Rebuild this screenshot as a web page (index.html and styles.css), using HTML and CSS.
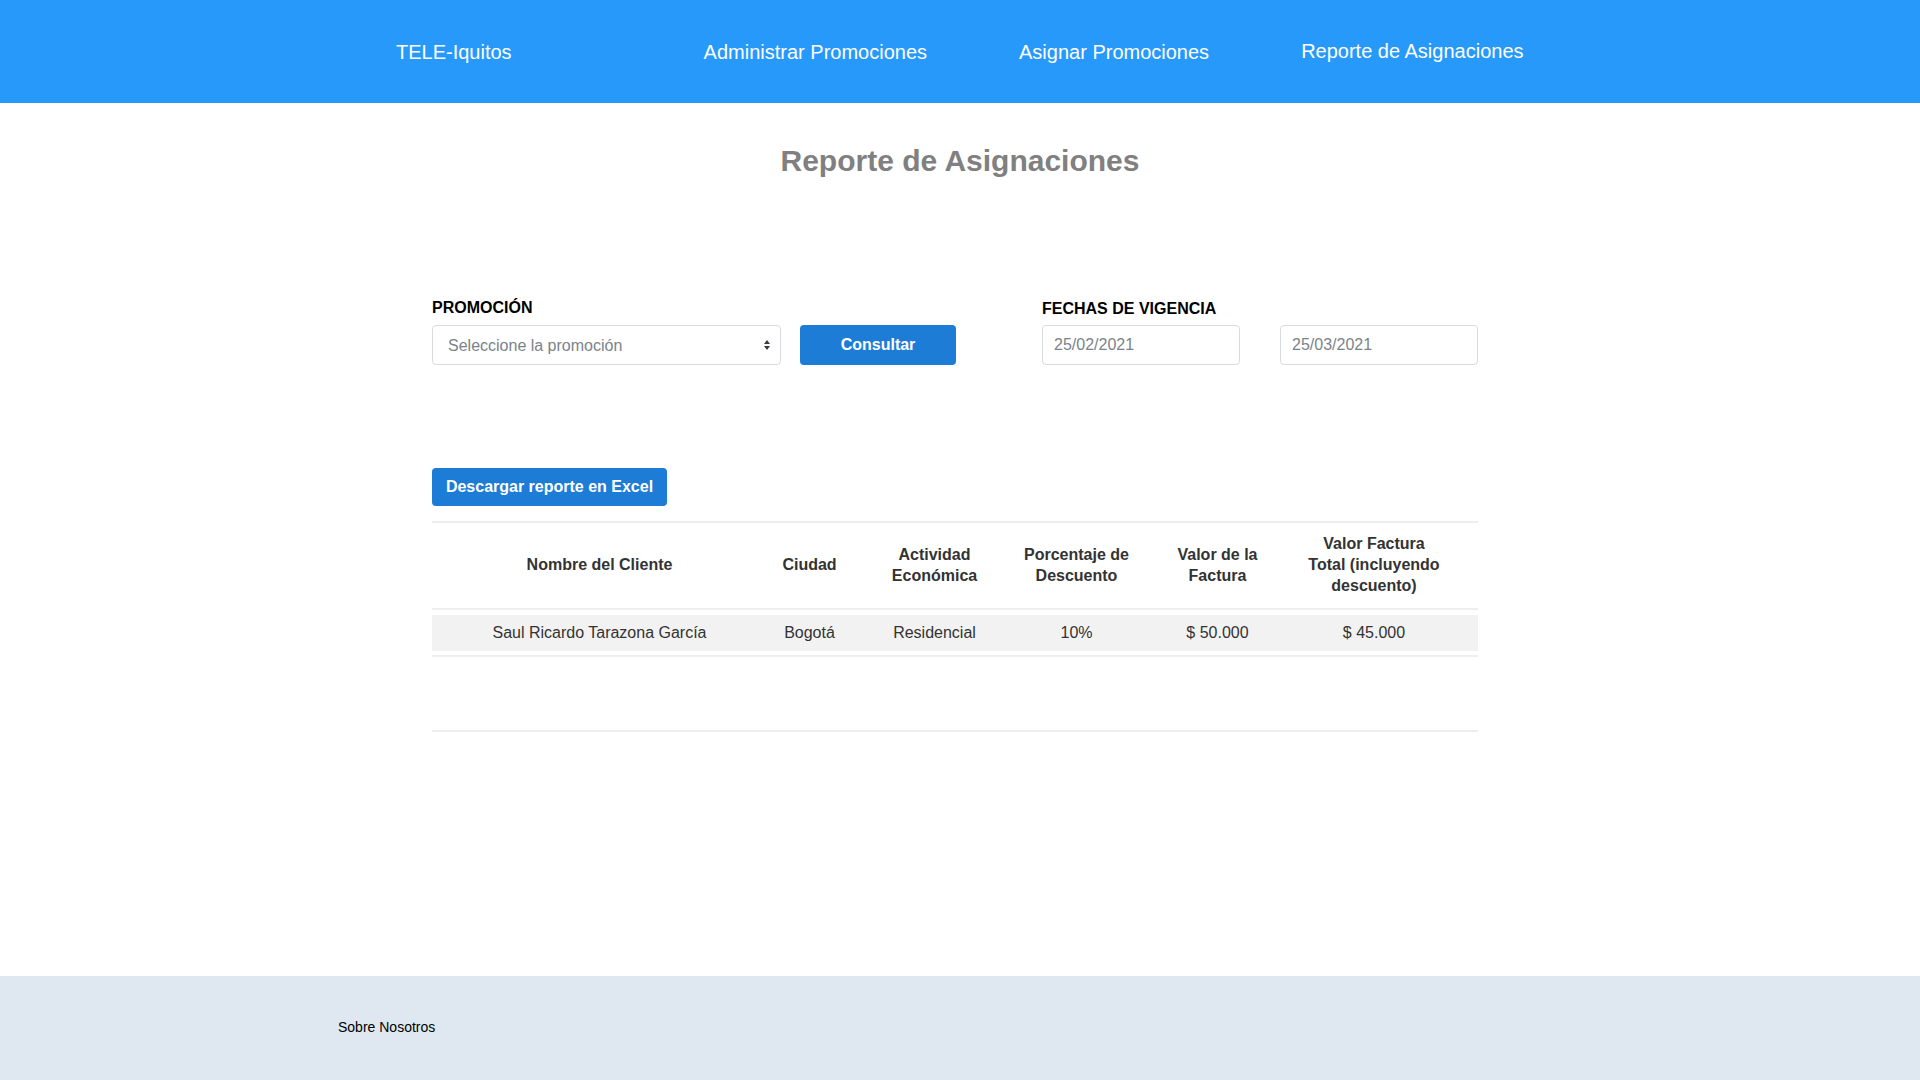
FILE: index.html
```html
<!DOCTYPE html>
<html lang="es">
<head>
<meta charset="utf-8">
<title>Reporte de Asignaciones</title>
<link rel="stylesheet" href="styles.css">
</head>
<body>
<header class="topbar">
  <a class="brand" href="#">TELE-Iquitos</a>
  <nav class="nav">
    <a class="nav-link" href="#">Administrar Promociones</a>
    <a class="nav-link" href="#">Asignar Promociones</a>
    <a class="nav-link nav-link-up" href="#">Reporte de Asignaciones</a>
  </nav>
</header>

<main class="main">
  <h1 class="page-title">Reporte de Asignaciones</h1>

  <div class="container">
    <section class="filters">
      <div class="group group-promo">
        <label class="label">PROMOCIÓN</label>
        <div class="row">
          <div class="select-wrap">
            <select class="select">
              <option>Seleccione la promoción</option>
            </select>
            <svg class="select-arrow" width="8" height="12" viewBox="0 0 8 12"><path d="M4 1 L7 5 L1 5 Z M1 7 L7 7 L4 11 Z" fill="#343a40"/></svg>
          </div>
          <button class="btn btn-consultar">Consultar</button>
        </div>
      </div>
      <div class="group group-dates">
        <label class="label">FECHAS DE VIGENCIA</label>
        <div class="row row-dates">
          <input class="input" type="text" value="25/02/2021">
          <input class="input" type="text" value="25/03/2021">
        </div>
      </div>
    </section>

    <button class="btn btn-excel">Descargar reporte en Excel</button>

    <table class="report">
      <colgroup>
        <col class="c1"><col class="c2"><col class="c3"><col class="c4"><col class="c5"><col class="c6">
      </colgroup>
      <thead>
        <tr>
          <th>Nombre del Cliente</th>
          <th>Ciudad</th>
          <th>Actividad<br>Económica</th>
          <th>Porcentaje de<br>Descuento</th>
          <th>Valor de la<br>Factura</th>
          <th class="last">Valor Factura<br>Total (incluyendo<br>descuento)</th>
        </tr>
      </thead>
      <tbody>
        <tr class="spacer"><td colspan="6"></td></tr>
        <tr class="data">
          <td>Saul Ricardo Tarazona García</td>
          <td>Bogotá</td>
          <td>Residencial</td>
          <td>10%</td>
          <td>$ 50.000</td>
          <td class="last">$ 45.000</td>
        </tr>
      </tbody>
    </table>
    <div class="table-foot"></div>
  </div>
</main>

<footer class="footer">
  <a class="footer-link" href="#">Sobre Nosotros</a>
</footer>
</body>
</html>
```

FILE: styles.css
```css
* { box-sizing: border-box; }

html, body {
  margin: 0;
  padding: 0;
}

body {
  font-family: "Liberation Sans", Arial, sans-serif;
  color: #333;
  min-height: 100vh;
  display: flex;
  flex-direction: column;
  background: #fff;
}

a { text-decoration: none; }

.topbar {
  height: 103px;
  background: #2699fb;
  display: flex;
  align-items: center;
  padding-left: 396px;
}

.brand {
  color: #fff;
  font-size: 20px;
  margin-right: 192px;
  padding-top: 1px;
}

.nav {
  display: flex;
  gap: 92px;
}

.nav-link {
  color: #fff;
  font-size: 20px;
  padding-top: 1px;
}

.nav-link-up {
  padding-top: 0;
}

.main {
  flex: 1;
  padding-top: 41px;
}

.page-title {
  margin: 0;
  text-align: center;
  font-size: 30px;
  line-height: 34px;
  font-weight: 700;
  color: #808080;
}

.container {
  width: 1046px;
  margin-left: 432px;
}

.filters {
  display: flex;
  margin-top: 120px;
  gap: 86px;
}

.group {
  display: flex;
  flex-direction: column;
}

.label {
  font-size: 16px;
  font-weight: 700;
  line-height: 19px;
  color: #000;
  margin-bottom: 8px;
}

.group-dates .label {
  margin-top: 1px;
  margin-bottom: 7px;
}

.row {
  display: flex;
  gap: 19px;
}

.row-dates {
  gap: 40px;
}

.select-wrap {
  position: relative;
  width: 349px;
  height: 40px;
}

.select {
  appearance: none;
  -webkit-appearance: none;
  width: 100%;
  height: 100%;
  border: 1px solid #d9dcdf;
  border-radius: 4px;
  background: #fff;
  font-family: "Liberation Sans", Arial, sans-serif;
  font-size: 16px;
  color: #7b838a;
  padding: 0 15px;
}

.select-arrow {
  position: absolute;
  right: 10px;
  top: 14px;
}

.btn {
  border: none;
  border-radius: 4px;
  background: #1c7cd6;
  color: #fff;
  font-family: "Liberation Sans", Arial, sans-serif;
  font-weight: 700;
  font-size: 16px;
  cursor: pointer;
}

.btn-consultar {
  width: 156px;
  height: 40px;
  padding-top: 1px;
}

.input {
  width: 198px;
  height: 40px;
  border: 1px solid #d9dcdf;
  border-radius: 4px;
  font-family: "Liberation Sans", Arial, sans-serif;
  font-size: 16px;
  color: #7b838a;
  padding: 0 11px;
}

.btn-excel {
  display: block;
  margin-top: 103px;
  width: 235px;
  height: 38px;
}

.report {
  margin-top: 15px;
  width: 1046px;
  table-layout: fixed;
  border-collapse: collapse;
}

.c1 { width: 335px; }
.c2 { width: 85px; }
.c3 { width: 165px; }
.c4 { width: 119px; }
.c5 { width: 163px; }
.c6 { width: 179px; }

.report th {
  border-top: 2px solid #eeeeee;
  border-bottom: 2px solid #eeeeee;
  height: 87px;
  padding: 0 4px 2px;
  font-size: 16px;
  line-height: 21px;
  font-weight: 700;
  color: #333;
  text-align: center;
  vertical-align: middle;
}

.report .spacer td {
  height: 6px;
  padding: 0;
}

.report .data td {
  background: #f2f2f2;
  height: 36px;
  padding: 0 4px;
  font-size: 16px;
  color: #333;
  text-align: center;
  vertical-align: middle;
}

.report th.last,
.report .data td.last {
  padding-right: 33px;
}

.table-foot {
  margin-top: 4px;
  height: 77px;
  border-top: 2px solid #eeeeee;
  border-bottom: 2px solid #eeeeee;
}

.footer {
  height: 104px;
  background: #dfe8f1;
  display: flex;
  align-items: center;
  padding-left: 338px;
  padding-bottom: 2px;
}

.footer-link {
  color: #000;
  font-size: 14px;
}
```
